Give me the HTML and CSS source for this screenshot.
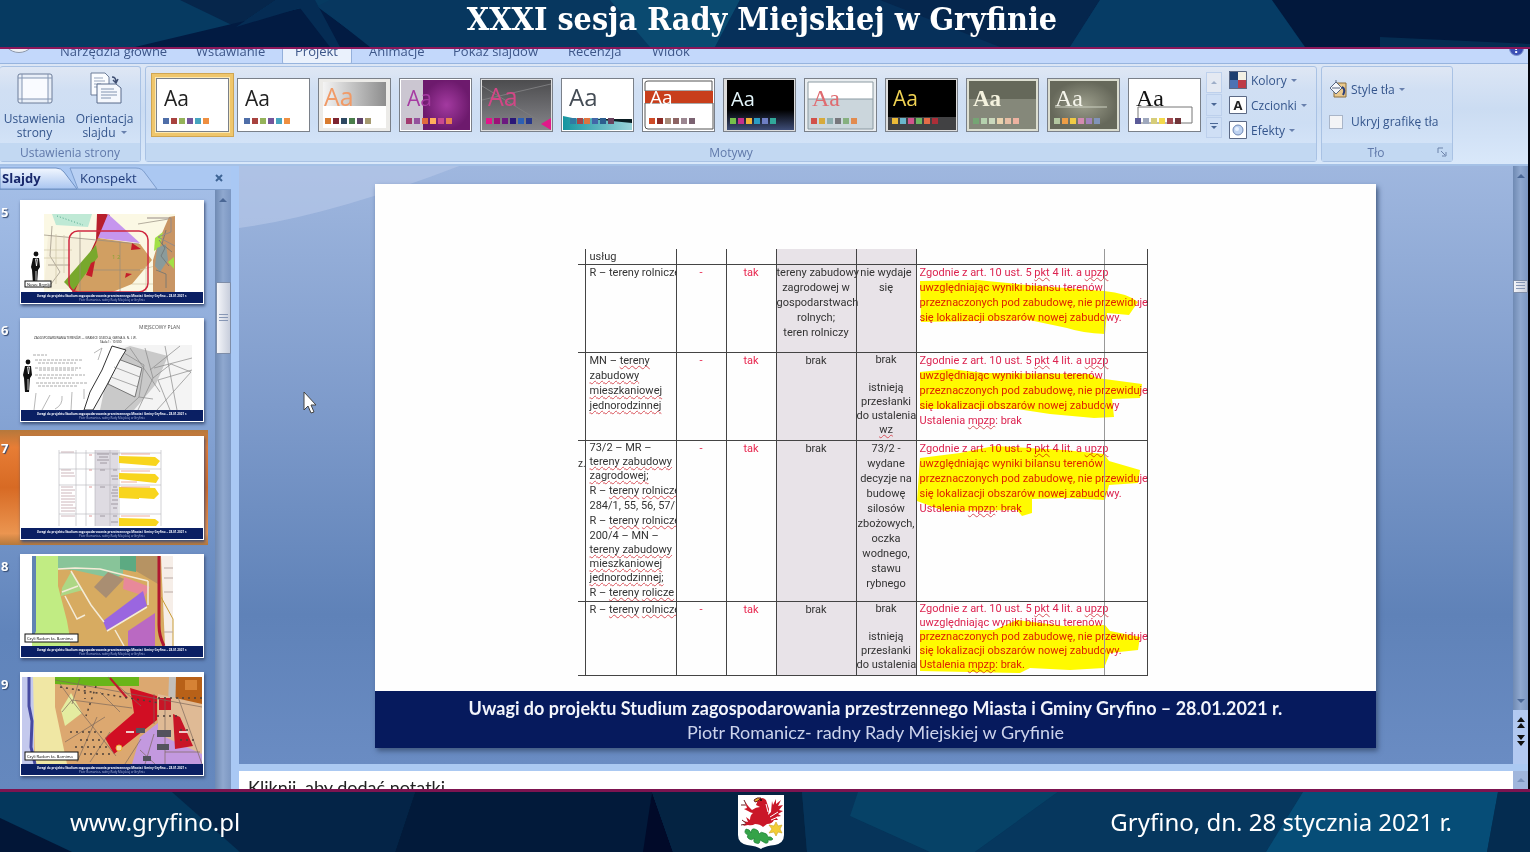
FILE: index.html
```html
<!DOCTYPE html>
<html lang="pl">
<head>
<meta charset="utf-8">
<title>XXXI sesja Rady Miejskiej w Gryfinie</title>
<link rel="stylesheet" href="styles.css">
</head>
<body>
<svg class="defs" aria-hidden="true">
  <defs>
    <g id="band">
      <rect x="1" y="92" width="182" height="11" fill="#0a1f63"/>
      <text x="92" y="97" text-anchor="middle" font-size="3" font-weight="700" fill="#f2f4fc">Uwagi do projektu Studium zagospodarowania przestrzennego Miasta i Gminy Gryfino – 28.01.2021 r.</text>
      <text x="92" y="101" text-anchor="middle" font-size="3" fill="#aab5da">Piotr Romanicz- radny Rady Miejskiej w Gryfinie</text>
    </g>
    <g id="person" fill="#111">
      <circle cx="0" cy="3" r="2.400"/><path d="M-3 7h6l1 9-2 3-1 14h-4l-1-14-1-3z"/><path d="M-.5 8h2l-1 7zM0 20v11" stroke="#fff" stroke-width=".8"/>
    </g>
    <linearGradient id="gGray" x1="0" x2="1"><stop stop-color="#f4f4f4"/><stop offset="1" stop-color="#8d8d8d"/></linearGradient>
    <linearGradient id="gDark" x1="0" x2="0" y1="0" y2="1"><stop stop-color="#4c4c4e"/><stop offset="1" stop-color="#85858a"/></linearGradient>
    <linearGradient id="gTeal"><stop stop-color="#1595a0"/><stop offset="1" stop-color="#9bd3da"/></linearGradient>
    <linearGradient id="gNight" x1="0" x2="0" y1="0" y2="1"><stop offset=".6"/><stop offset="1" stop-color="#3e4d77"/></linearGradient>
    <radialGradient id="gPurple"><stop stop-color="#a33aa0"/><stop offset="1" stop-color="#6d1a6d"/></radialGradient>
    <radialGradient id="gOlive"><stop stop-color="#9c9e8c"/><stop offset="1" stop-color="#66685a"/></radialGradient>
  </defs>
</svg>

<header class="banner">
  <svg class="facets" viewBox="0 0 1530 47" preserveAspectRatio="none" aria-hidden="true">
    <rect width="1530" height="47" fill="#063a61"/>
    <path d="M180 0H276L236 27z" fill="#06264b"/><path d="M135 47L236 23 315 5 372 47z" fill="#021b42"/><path d="M276 0H315L340 47H330L300 8 236 27z" fill="#052c54"/>
    <path d="M330 0H640L650 47H370L318 6z" fill="#07375f"/><path d="M610 0H740L715 47H650z" fill="#0a4a70"/><path d="M740 0H1100L1070 47H715z" fill="#06305a"/><path d="M880 0H1100L1070 47H1000z" fill="#05264d"/>
    <path d="M1100 0H1272L1305 47H1070z" fill="#063c65"/><path d="M1272 0H1530V47H1305z" fill="#02183c"/><path d="M1380 37L1530 44V47H1380z" fill="#052c51"/>
  </svg>
  <h1 class="banner-title">XXXI sesja Rady Miejskiej w Gryfinie</h1>
</header>

<main class="app">
  <nav class="ribbon-tabs">
    <span class="office-orb"></span>
    <button class="tab tab-home">Narzędzia główne</button>
    <button class="tab tab-insert">Wstawianie</button>
    <button class="tab tab-design active">Projekt</button>
    <button class="tab tab-anim">Animacje</button>
    <button class="tab tab-show">Pokaz slajdów</button>
    <button class="tab tab-review">Recenzja</button>
    <button class="tab tab-view">Widok</button>
    <button class="help" aria-label="Pomoc">?</button>
  </nav>

  <section class="ribbon">
    <div class="group group-page">
      <div class="group-body">
        <button class="big">
          <svg width="36" height="32" viewBox="0 0 36 32"><rect x="1" y="2" width="34" height="29" rx="2" fill="#e9eff8" stroke="#6c7d99"/><rect x="5" y="6" width="26" height="21" fill="#f9fbff"/><path d="M5 2v29M31 2v29M1 6h34M1 27h34" stroke="#8395b2" stroke-width="1"/></svg>
          <span>Ustawienia<br>strony</span>
        </button>
        <button class="big">
          <svg width="36" height="32" viewBox="0 0 36 32"><path d="M4 1h14l4 4v18H4z" fill="#fafcff" stroke="#6c7d99"/><path d="M7 6h9M7 9h11M7 12h7M7 15h7" stroke="#97a5bd"/><path d="M10 12h19l5 4v15H10z" fill="#f5f8fd" stroke="#586a8a"/><path d="M14 17h13M14 20h16M14 23h16M14 26h10" stroke="#8294b0"/><path d="M25 5q4 0 4 5M26 8l3 3 2-4" fill="none" stroke="#3d4d70" stroke-width="1.500"/></svg>
          <span>Orientacja<br>slajdu <i class="caret"></i></span>
        </button>
      </div>
      <div class="group-label">Ustawienia strony</div>
    </div>

    <div class="group group-themes">
      <div class="group-body">
        <div class="gallery">
          <button class="theme selected"><svg viewBox="0 0 73 54"><rect width="73" height="54" fill="#fff"/><text x="8" y="28" font-size="21" fill="#222">Aa</text><path fill="#4f6ea8" d="M7 40h6v6H7z"/><path fill="#a8423f" d="M15 40h6v6h-6z"/><path fill="#95b35a" d="M23 40h6v6h-6z"/><path fill="#75559a" d="M31 40h6v6h-6z"/><path fill="#46a5bf" d="M39 40h6v6h-6z"/><path fill="#ef8f40" d="M47 40h6v6h-6z"/></svg></button>
          <button class="theme"><svg viewBox="0 0 73 54"><rect width="73" height="54" fill="#fff"/><text x="8" y="28" font-size="21" fill="#222">Aa</text><path fill="#4f6ea8" d="M7 40h6v6H7z"/><path fill="#a8423f" d="M15 40h6v6h-6z"/><path fill="#95b35a" d="M23 40h6v6h-6z"/><path fill="#75559a" d="M31 40h6v6h-6z"/><path fill="#46a5bf" d="M39 40h6v6h-6z"/><path fill="#ef8f40" d="M47 40h6v6h-6z"/></svg></button>
          <button class="theme"><svg viewBox="0 0 73 54"><rect width="73" height="54" fill="#ecebe8"/><rect x="5" y="4" width="63" height="24" fill="url(#gGray)"/><rect x="5" y="28" width="63" height="22" fill="#fff"/><text x="6" y="28" font-size="25" fill="#f19a66">Aa</text><path fill="#d97b2e" d="M7 40h6v6H7z"/><path fill="#7e2430" d="M15 40h6v6h-6z"/><path fill="#2e4961" d="M23 40h6v6h-6z"/><path fill="#4b7e4b" d="M31 40h6v6h-6z"/><path fill="#5e4268" d="M39 40h6v6h-6z"/><path fill="#a59a70" d="M47 40h6v6h-6z"/></svg></button>
          <button class="theme"><svg viewBox="0 0 73 54"><rect width="73" height="54" fill="#fff"/><rect x="2" y="2" width="22" height="50" fill="#cbc6d1"/><rect x="24" y="2" width="47" height="50" fill="url(#gPurple)"/><text x="8" y="28" font-size="21" fill="#a63ba2">Aa</text><path fill="#a23a70" d="M7 40h6v6H7z"/><path fill="#94529d" d="M15 40h6v6h-6z"/><path fill="#e0693c" d="M23 40h6v6h-6z"/><path fill="#ffad5c" d="M31 40h6v6h-6z"/><path fill="#c9488f" d="M39 40h6v6h-6z"/><path fill="#e77f50" d="M47 40h6v6h-6z"/></svg></button>
          <button class="theme"><svg viewBox="0 0 73 54"><rect width="73" height="54" fill="#ddd"/><rect x="2" y="2" width="69" height="50" fill="url(#gDark)"/><path d="M2 8L71 50M2 22L71 6" stroke="#7c7c7e"/><path d="M61 46l10-6v12z" fill="#e0198a"/><text x="8" y="28" font-size="25" fill="#d24786">Aa</text><path fill="#e3158a" d="M6 40h6v6H6z"/><path fill="#9c1277" d="M14 40h6v6h-6z"/><path fill="#6c1980" d="M22 40h6v6h-6z"/><path fill="#2a1878" d="M30 40h6v6h-6z"/><path fill="#2c60b4" d="M38 40h6v6h-6z"/><path fill="#27378b" d="M46 40h6v6h-6z"/></svg></button>
          <button class="theme"><svg viewBox="0 0 73 54"><rect width="73" height="54" fill="#fff"/><path d="M2 38q14 4 30 2l39 3v9H2z" fill="url(#gTeal)"/><path d="M30 41h41v4z" fill="#0a1d22"/><text x="8" y="28" font-size="24" fill="#444c55">Aa</text><path fill="#317aa2" d="M9 40h6v6H9z"/><path fill="#a74646" d="M16 40h6v6h-6z"/><path fill="#df7440" d="M23 40h6v6h-6z"/><path fill="#4267a8" d="M31 40h6v6h-6z"/><path fill="#2c5e8e" d="M39 40h6v6h-6z"/><path fill="#69425d" d="M47 40h6v6h-6z"/></svg></button>
          <button class="theme"><svg viewBox="0 0 73 54"><rect width="73" height="54" fill="#fff"/><path d="M3 13V5q0-2 3-2h64v10zM3 25h68v26H6q-3 0-3-3z" fill="#fff" stroke="#555"/><rect x="3" y="13" width="68" height="12" fill="#c83e1b"/><text x="8" y="26" font-size="19" fill="#fff">Aa</text><path fill="#cf4b27" d="M7 40h6v6H7z"/><path fill="#8c2a25" d="M15 40h6v6h-6z"/><path fill="#a68b79" d="M23 40h6v6h-6z"/><path fill="#8d6463" d="M31 40h6v6h-6z"/><path fill="#9b8791" d="M39 40h6v6h-6z"/><path fill="#7b6271" d="M47 40h6v6h-6z"/></svg></button>
          <button class="theme"><svg viewBox="0 0 73 54"><rect width="73" height="54" fill="#ddd"/><rect x="4" y="2" width="67" height="50" fill="url(#gNight)"/><text x="8" y="28" font-size="20" fill="#e3f5fa">Aa</text><path fill="#76bf4a" d="M7 40h6v6H7z"/><path fill="#c42f8c" d="M15 40h6v6h-6z"/><path fill="#f1b335" d="M23 40h6v6h-6z"/><path fill="#2b9dc5" d="M31 40h6v6h-6z"/><path fill="#6e7ec4" d="M39 40h6v6h-6z"/><path fill="#31a89a" d="M47 40h6v6h-6z"/></svg></button>
          <button class="theme"><svg viewBox="0 0 73 54"><rect width="73" height="54" fill="#e9edf0"/><rect x="4" y="4" width="65" height="17" fill="#fff"/><rect x="4" y="21" width="65" height="30" fill="#cbd6dc"/><path d="M4 21h65M4 4h65v47H4z" stroke="#8b9aa2" fill="none"/><text class="serif" x="8" y="28" font-size="24" fill="#df6b70">Aa</text><path fill="#d15149" d="M7 40h6v6H7z"/><path fill="#d7aa3a" d="M15 40h6v6h-6z"/><path fill="#8daeae" d="M23 40h6v6h-6z"/><path fill="#77777c" d="M31 40h6v6h-6z"/><path fill="#86b07f" d="M39 40h6v6h-6z"/><path fill="#e28b4e" d="M47 40h6v6h-6z"/></svg></button>
          <button class="theme"><svg viewBox="0 0 73 54"><rect width="73" height="54" fill="#ddd"/><rect x="3" y="2" width="68" height="37" /><rect x="3" y="39" width="68" height="13" fill="#414143"/><text x="8" y="28" font-size="21" fill="#efd253">Aa</text><path fill="#ecba37" d="M7 40h6v6H7z"/><path fill="#6ab7cc" d="M15 40h6v6h-6z"/><path fill="#d0548b" d="M23 40h6v6h-6z"/><path fill="#6db763" d="M31 40h6v6h-6z"/><path fill="#e56b48" d="M39 40h6v6h-6z"/><path fill="#ac2e38" d="M47 40h6v6h-6z"/></svg></button>
          <button class="theme"><svg viewBox="0 0 73 54"><rect width="73" height="54" fill="#dddfd2"/><rect x="3" y="3" width="67" height="18" fill="#65685a"/><rect x="3" y="21" width="67" height="30" fill="#85887a"/><text class="serif" x="7" y="28" font-size="23" font-weight="700" fill="#f4f2de">Aa</text><path fill="#75a574" d="M7 40h6v6H7z"/><path fill="#b5d1ae" d="M15 40h6v6h-6z"/><path fill="#cbd9bd" d="M23 40h6v6h-6z"/><path fill="#ead3ae" d="M31 40h6v6h-6z"/><path fill="#e7bea5" d="M39 40h6v6h-6z"/><path fill="#edb2a0" d="M47 40h6v6h-6z"/></svg></button>
          <button class="theme"><svg viewBox="0 0 73 54"><rect width="73" height="54" fill="#dadccf"/><rect x="3" y="3" width="67" height="48" fill="url(#gOlive)"/><path d="M8 29h52" stroke="#ccd0c1"/><text class="serif" x="8" y="28" font-size="24" fill="#f5f5eb">Aa</text><path fill="#b3c7a0" d="M7 40h6v6H7z"/><path fill="#ed9d46" d="M15 40h6v6h-6z"/><path fill="#f0cb44" d="M23 40h6v6h-6z"/><path fill="#d48bb0" d="M31 40h6v6h-6z"/><path fill="#a182bc" d="M39 40h6v6h-6z"/><path fill="#8194b9" d="M47 40h6v6h-6z"/></svg></button>
          <button class="theme"><svg viewBox="0 0 73 54"><rect width="73" height="54" fill="#fff"/><path d="M10 29h54v16H10z" fill="#fff" stroke="#777"/><text class="serif" x="8" y="28" font-size="24" fill="#111">Aa</text><path fill="#5b5b98" d="M7 40h6v6H7z"/><path fill="#9fa8bd" d="M15 40h6v6h-6z"/><path fill="#d6cd79" d="M23 40h6v6h-6z"/><path fill="#f3d94d" d="M31 40h6v6h-6z"/><path fill="#a24b51" d="M39 40h6v6h-6z"/><path fill="#713539" d="M47 40h6v6h-6z"/></svg></button>
        </div>
        <div class="gallery-scroll">
          <button aria-label="W górę"><i class="arrow up dim"></i></button>
          <button aria-label="W dół"><i class="arrow down"></i></button>
          <button aria-label="Więcej"><i class="arrow down more"></i></button>
        </div>
        <div class="stack">
          <button class="small"><svg width="18" height="18" viewBox="0 0 18 18"><path fill="#1d3f70" d="M0 0h9v9H0z"/><path fill="#f3f0e4" d="M9 0h9v9H9z"/><path fill="#4d72b3" d="M0 9h9v9H0z"/><path fill="#bd3a46" d="M9 9h9v9H9z"/><path d="M.5.5h17v17H.5z" fill="none" stroke="#5c6a86"/></svg>Kolory <i class="caret"></i></button>
          <button class="small"><svg width="18" height="18" viewBox="0 0 18 18"><path d="M.5.5h17v17H.5z" fill="#fff" stroke="#5c6a86"/><text x="9" y="14" text-anchor="middle" font-size="13" font-weight="700" fill="#222">A</text></svg>Czcionki <i class="caret"></i></button>
          <button class="small"><svg width="18" height="18" viewBox="0 0 18 18"><path d="M.5.5h17v17H.5z" fill="#fff" stroke="#5c6a86"/><circle cx="9" cy="9" r="5" fill="#bfd3f1" stroke="#6f88b5"/><circle cx="8" cy="8" r="2" fill="#e9f2ff"/></svg>Efekty <i class="caret"></i></button>
        </div>
      </div>
      <div class="group-label">Motywy</div>
    </div>

    <div class="group group-back">
      <div class="group-body">
        <div class="back-stack">
          <button class="small"><svg width="18" height="18" viewBox="0 0 18 18"><path d="M8 3h9v14H5v-5z" fill="#e9c98e" stroke="#8c6f3d"/><path d="M1 8l6-6 6 6-6 6z" fill="#f4f6fa" stroke="#56657f"/><path d="M7 2V0M3 8h8" stroke="#56657f"/><path d="M13 7q4 2 1 8" fill="none" stroke="#2b3f79" stroke-width="2"/></svg>Style tła <i class="caret"></i></button>
          <label class="check"><input type="checkbox"> Ukryj grafikę tła</label>
        </div>
      </div>
      <div class="group-label label-back">Tło<button class="launcher" aria-label="Opcje tła"><svg width="10" height="10" viewBox="0 0 10 10"><path d="M1 6V1h5M4 4l4 4M9 5v4H5" fill="none" stroke="#6d83aa"/></svg></button></div>
    </div>
  </section>

  <div class="workspace">
    <aside class="pane">
      <div class="pane-tabs">
        <svg class="pane-shape" viewBox="0 0 230 24" aria-hidden="true"><defs><linearGradient id="gTab" x1="0" x2="0" y1="0" y2="1"><stop stop-color="#f2f7ff"/><stop offset="1" stop-color="#a9c5f0"/></linearGradient></defs><path d="M70 2H136q6 0 9 5l12 16H78z" fill="#b9d0f3" stroke="#7d9dcd"/><path d="M0 2H56q5 0 8 4l13 17H0z" fill="url(#gTab)" stroke="#6f91c4"/></svg>
        <button class="pane-tab current">Slajdy</button>
        <button class="pane-tab">Konspekt</button>
        <button class="pane-close" aria-label="Zamknij"><svg width="8" height="8" viewBox="0 0 8 8"><path d="M1 1l6 6M7 1L1 7" stroke="#3f6596" stroke-width="2"/></svg></button>
      </div>
      <div class="pane-body">
        <ol class="slides">
          <li class="slide-item"><b>5</b>
            <svg class="mini" viewBox="0 0 184 104"><rect width="184" height="104" fill="#fff"/>
              <path d="M24 14H155V92H24z" fill="#fbf8e4"/><path d="M32 14h40l-4 13-32-2z" fill="#bfe9d5"/><path d="M37 16l26 9" stroke="#4fa58a" stroke-dasharray="1 2"/>
              <path d="M28 35l-4 54h30l24-50z" fill="#f5efdb"/><path d="M77 14h9l4 1-12 27-22 50h-4L76 40z" fill="#b71f2c"/>
              <path d="M88 14l32 29-42-5z" fill="#c696ee"/><path d="M78 38l42 6 12 16-20 24-22 9H54l22-50z" fill="#d19f62"/><path d="M76 45l2 12-25 34-9-9z" fill="#78a82c"/>
              <path d="M24 35l95 9M32 26l-2 30 10 16-12 16M118 24l37-6M60 32v60M100 42v50M28 65h22M70 70h50" fill="none" stroke="#958c7f" stroke-width=".7"/>
              <path d="M24 50h28M24 58h25M36 34v50M44 35v38M120 70l30-8M112 84h22M126 66v26" stroke="#cfc5a6" stroke-width=".7"/>
              <path d="M133 60l6-20 10-23 6-1v76h-22z" fill="#c89564"/><path d="M135 38l8-6-3 15-6 4z" fill="#a2e046"/><path d="M148 62l6-5v12z" fill="#a2e046"/><path d="M137 48l9-4 2 16-8 12-5-6z" fill="#8a9b9b"/><path d="M139 40l6 8-4 8 8 10M146 30l-4 14 10 8M136 70l10 4v14" fill="none" stroke="#6d7374" stroke-width=".8"/>
              <path d="M112 43l9 6-10 1zM71 63l4-2-3 16-6-2zM106 73l6 1-7 4z" fill="#c41d2a"/><path d="M127 18h24v14l-13 5 17 9" fill="none" stroke="#968a87"/>
              <rect x="49" y="31" width="79" height="61" rx="9" fill="none" stroke="#cf2840" stroke-width="1.500"/>
              <text x="92" y="59" font-size="6" fill="#89a334">1 2</text><use href="#person" x="16" y="51"/><rect x="5" y="81" width="26" height="6" fill="#fff" stroke="#111"/><text x="7" y="86" font-size="4">Nowe Brynki</text><use href="#band"/></svg>
          </li>
          <li class="slide-item"><b>6</b>
            <svg class="mini" viewBox="0 0 184 104"><rect width="184" height="104" fill="#fff"/>
              <text x="119" y="11" font-size="5" fill="#555">MIEJSCOWY PLAN</text><text x="14" y="21" font-size="3" fill="#222">ZAGOSPODAROWANIA TERENÓW — GRANICE OSIEDLA, GMINA G. N. I. W.</text><text x="80" y="25" font-size="3">Skala 1 : 10 000</text>
              <path d="M98 27H172V92H70l10-25z" fill="#f4f4f4"/><path d="M92 35l18-7 38 10-12 28-22 26H80z" fill="#c9c9c9"/><path d="M98 41l24 9-7 29-27-13z" fill="#f2f2f2" stroke="#777"/>
              <path d="M92 28l14 4-6 10-13 25-14 25H64l6-18 12-22z" fill="#fff" stroke="#333"/><path d="M104 35l20 12-5 32-14 13M94 49l26 10M91 59l27 10M125 30l8 30-15 32M133 60l18-14 20 8-34 38M160 28l-30 24M110 30l30 44M172 40l-38 10M150 92l-12-30 34-10M145 28l12 64M119 79l14 2" fill="none" stroke="#888" stroke-width=".7"/>
              <path d="M74 35l8-5-4 12M16 75l-2 17M30 77L22 92M42 78q1 9-7 13M52 74l-1 18M64 71v10" fill="none" stroke="#999" stroke-width=".7"/>
              <path d="M13 37h14M15 42h48M18 45h38M15 50h46M19 52h37M15 57h50M18 60h34M16 65h51M18 68h39" stroke="#aaa" stroke-dasharray="3 1"/><use href="#person" x="8" y="41"/><use href="#band"/></svg>
          </li>
          <li class="slide-item chosen"><b>7</b>
            <svg class="mini" viewBox="0 0 184 104"><rect width="184" height="104" fill="#fff"/><path d="M75 14h23v76H75z" fill="#dedbe2"/><path d="M39 17h102M39 33h102M39 49h102M39 78h102M39 14v76M56 14v76M66 14v76M75 14v76M90 14v76M99 14v76M141 14v76" stroke="#b4b4ba" stroke-width=".6"/><path d="M99 20l36 1 5 4-4 5-37-3zM99 37l36 1 4 4-3 5-37-4zM99 51l36 1 4 6-5 5-15-1v1l-20-1zM99 82l36 1 4 3-3 4H99z" fill="#f8d51d"/><path d="M101 18h29M101 35h29M101 51h29M101 80h29M101 46h16" stroke="#eb9a86" stroke-width=".8"/><path d="M41 16h13M41 34h10M41 37h13M41 40h14M41 51h12M41 54h14M41 57h11M41 60h14M41 63h14M41 66h14M41 69h12M41 72h15M41 75h14M41 80h14" stroke="#c0a3a9" stroke-width=".8"/><path d="M77 18h12M79 21h9M77 24h12M80 27h7M92 18h6M93 34h4M91 40h7M92 43h6M93 51h4M92 54h6M91 57h7M92 60h6M92 64h6M91 68h7M93 72h4M93 80h4M91 86h7M80 34h5M80 51h5M80 80h5" stroke="#8f8993" stroke-width=".8"/><path d="M69 19h3M69 34h3M69 51h3M69 80h3" stroke="#d99"/><use href="#band"/></svg>
          </li>
          <li class="slide-item"><b>8</b>
            <svg class="mini" viewBox="0 0 184 104"><rect width="184" height="104" fill="#fff"/><path d="M12 2h141v90H12z" fill="#d7ab61"/><path d="M12 2h26v30l9 35 3 17v8H12z" fill="#c1ec83"/><path d="M12 2h4v75l-4 10z" fill="#6083b3"/><path d="M38 2h65v18l-8 5-41-9-16-1z" fill="#88c499"/><path d="M100 2h16v16l-16-3z" fill="#5caa82"/><path d="M116 2h22v28l-22-13z" fill="#b69363"/><path d="M42 34l9-16 12 18-22 6z" fill="#add785"/><path d="M104 23l26 10-5 9-22-7z" fill="#e8899a"/><path d="M88 18l16 7-18 19-12-11z" fill="#a98e72"/><path d="M83 67l40-30 4 15-40 25z" fill="#9a66e0"/><path d="M108 77l27-18v33h-27z" fill="#ba69c2"/><path d="M141 2h12v90h-8z" fill="#f6eee8"/><path d="M38 15l17-1 25 1 48 12M51 17l20 34 13 17M58 32l-16 6M87 77l40-24M128 27v24M45 42l12 23 8-4M95 76l9 16" fill="none" stroke="#f4ebd7" stroke-width="1.500"/><path d="M139 2v69q0 11 5 21" fill="none" stroke="#b01830" stroke-width="3"/><path d="M141 43l12 22v27" fill="none" stroke="#c89c36"/><path d="M144 14h9M144 24h9M144 38h9M144 78h9" stroke="#b9aaa6"/><rect x="5" y="80" width="53" height="8" fill="#fff" stroke="#111"/><text x="7" y="86" font-size="4">Czyli Radom ks. Barnima</text><use href="#band"/></svg>
          </li>
          <li class="slide-item"><b>9</b>
            <svg class="mini" viewBox="0 0 184 104"><rect width="184" height="104" fill="#fff"/><path d="M2 5h180v87H2z" fill="#dca870"/><path d="M2 5h12v87H2z" fill="#c4c9ed"/><path d="M13 5h22v30l12 57H15z" fill="#f0e7a4"/><path d="M35 5h84v9H75L35 12z" fill="#69b519"/><path d="M154 5h28v35l-27-9z" fill="#b86118"/><path d="M165 8h12v10h-12z" fill="#d68235"/><path d="M41 38l10-17 11 20-17 13z" fill="#e4eca0"/><path d="M149 5h7l-2 87h-8z" fill="#c3bfba"/><path d="M120 65l18-14 44 26v15h-70z" fill="#c399df"/><path d="M138 22l44 10v50l-44-20z" fill="#dfba95"/><path d="M110 16l27 8v24l-28 22-15 12-9-16 29-25z" fill="#d10e23"/><path d="M139 26h12v12h-12zM153 42l7 3 13 29-18 3z" fill="#c81527"/><path d="M9 5v29l3 15-1 26 4 17" fill="none" stroke="#474aa0" stroke-width="3"/><path d="M35 8l147 27M40 12l13 18 43 54M42 40l10-12 60 8M80 20l20 20M88 5l33 29M45 70l40-25M57 90l20-45M70 90l20-30M105 92l16-25M125 92l9-30M134 22v30M145 25v67M60 6l-8 26M158 25l24 67M145 80h35M120 78l15 14" fill="none" stroke="#7c685b" stroke-width=".7"/><path d="M90 6l17 20" stroke="#c1182c" stroke-width="2"/><path d="M40 15l100 16M65 14v13M76 14l-10 30M138 26h44M50 60h35M55 75h35M137 44h20M160 58h10M60 68h24M64 82h26M160 68h18" stroke="#4d4039" stroke-width="1.500" stroke-dasharray="2 4"/><path d="M137 58h14v7h-14zM137 72h12v6h-12zM123 84h8v5h-8zM116 56h9v5h-9z" fill="#54525e"/><path d="M106 60h8M159 60h9" stroke="#f0c9c9" stroke-width="2"/><circle cx="99" cy="76" r="3" fill="#f5d3a1" stroke="#eaaf33"/><rect x="5" y="80" width="53" height="8" fill="#fff" stroke="#111"/><text x="7" y="86" font-size="4">Czyli Radom ks. Barnima</text><use href="#band"/></svg>
          </li>
        </ol>
        <div class="scroll pane-scroll"><i class="arrow up"></i><span class="scroll-thumb"></span></div>
      </div>
    </aside>

    <section class="editor">
      <div class="stage-row">
        <div class="stage">
          <svg class="swoosh" viewBox="0 0 1273 100" preserveAspectRatio="none" aria-hidden="true"><path d="M0 0H220Q90 50 0 62z" fill="#b9caea" opacity=".6"/></svg>
          <svg class="cursor" width="14" height="23" viewBox="0 0 14 23"><path d="M1 1v18l4-4 3 7 3-1-3-7h5z" fill="#fff" stroke="#444"/></svg>
          <article class="slide">
            <table class="plan">
              <colgroup><col class="c-edge"><col class="c-area"><col class="c-mark"><col class="c-mark"><col class="c-use"><col class="c-wz"><col class="c-note"></colgroup>
              <tbody>
              <tr class="r-top"><td></td><td>usług</td><td></td><td></td><td class="gray"></td><td class="gray"></td><td class="note"></td></tr>
              <tr class="r-mid"><td></td><td>R – tereny rolnicze</td><td class="red">-</td><td class="red">tak</td><td class="gray">tereny zabudowy<br>zagrodowej w<br>gospodarstwach<br>rolnych;<br>teren rolniczy</td><td class="gray">nie wydaje<br>się</td>
                <td class="note"><svg class="marker" width="230" height="80" viewBox="0 0 230 80"><path d="M3 16L60 15 110 20 187 26Q210 28 221 37L212 50 190 48 188 69Q165 68 150 63L112 55 4 57z"/></svg><p>Zgodnie z art. 10 ust. 5 <u>pkt</u> 4 lit. a <u>upzp</u><br>uwzględniając wyniki bilansu terenów<br>przeznaczonych pod zabudowę, nie przewiduje<br>się lokalizacji obszarów nowej zabudowy.</p></td></tr>
              <tr class="r-mid"><td></td><td>MN – <u>tereny</u><br><u>zabudowy</u><br><u>mieszkaniowej</u><br><u>jednorodzinnej</u></td><td class="red">-</td><td class="red">tak</td><td class="gray">brak</td><td class="gray tight">brak<br><br>istnieją<br>przesłanki<br>do ustalenia<br><u>wz</u></td>
                <td class="note"><svg class="marker" width="230" height="80" viewBox="0 0 230 80"><path d="M3 19L33 16 67 20 173 21 180 25 225 31 223 45 195 46 197 64 177 65 133 61 100 56 3 56z"/></svg><p>Zgodnie z art. 10 ust. 5 <u>pkt</u> 4 lit. a <u>upzp</u><br>uwzględniając wyniki bilansu terenów<br>przeznaczonych pod zabudowę, nie przewiduje<br>się lokalizacji obszarów nowej zabudowy<br>Ustalenia <u>mpzp</u>: brak</p></td></tr>
              <tr class="r-tall"><td class="edge-text">z.</td><td class="tight"><p>73/2 – MR –<br><u>tereny zabudowy</u><br><u>zagrodowej;</u></p><p>R – <u>tereny</u> <u>rolnicze</u></p><p>284/1, 55, 56, 57/1</p><p>R – <u>tereny</u> <u>rolnicze</u></p><p>200/4 – MN –<br><u>tereny zabudowy</u><br><u>mieszkaniowej</u><br><u>jednorodzinnej;</u></p><p>R – <u>tereny</u> <u>rolicze</u></p></td><td class="red">-</td><td class="red">tak</td><td class="gray">brak</td><td class="gray">73/2 -<br>wydane<br>decyzje na<br>budowę<br>silosów<br>zbożowych,<br>oczka<br>wodnego,<br>stawu<br>rybnego</td>
                <td class="note"><svg class="marker" width="230" height="80" viewBox="0 0 230 80"><path d="M3 17L43 12 77 5 147 9 187 13 192 20 223 29 221 42 192 44 188 59 150 57 115 58 115 72 105 75 100 69 27 70 0 60z"/></svg><p>Zgodnie z art. 10 ust. 5 <u>pkt</u> 4 lit. a <u>upzp</u><br>uwzględniając wyniki bilansu terenów<br>przeznaczonych pod zabudowę, nie przewiduje<br>się lokalizacji obszarów nowej zabudowy.<br>Ustalenia <u>mpzp</u>: brak</p></td></tr>
              <tr class="r-last"><td></td><td>R – <u>tereny</u> <u>rolnicze</u></td><td class="red">-</td><td class="red">tak</td><td class="gray">brak</td><td class="gray tight">brak<br><br>istnieją<br>przesłanki<br>do ustalenia</td>
                <td class="note tight"><svg class="marker" width="230" height="80" viewBox="0 0 230 80"><path d="M3 28L77 28 100 18 147 24 188 23 193 29 223 35 221 48 193 51 187 66 153 68 113 66 103 71 3 69z"/></svg><p>Zgodnie z art. 10 ust. 5 <u>pkt</u> 4 lit. a <u>upzp</u><br>uwzględniając wyniki bilansu terenów<br>przeznaczonych pod zabudowę, nie przewiduje<br>się lokalizacji obszarów nowej zabudowy.<br>Ustalenia <u>mpzp</u>: brak.</p></td></tr>
              </tbody>
            </table>
            <footer class="slide-foot">
              <strong>Uwagi do projektu Studium zagospodarowania przestrzennego Miasta i Gminy Gryfino – 28.01.2021 r.</strong>
              <span>Piotr Romanicz- radny Rady Miejskiej w Gryfinie</span>
            </footer>
          </article>
        </div>
        <div class="scroll stage-scroll">
          <i class="arrow up"></i><span class="scroll-thumb"></span><i class="arrow down low"></i>
          <div class="pager"><svg width="10" height="11" viewBox="0 0 10 11"><path d="M5 0l4 5H1zM5 6l4 5H1z" fill="#111"/></svg><svg width="10" height="11" viewBox="0 0 10 11"><path d="M5 5l4-5H1zM5 11l4-5H1z" fill="#111"/></svg></div>
        </div>
      </div>
      <div class="notes"><textarea aria-label="Notatki" rows="1">Kliknij, aby dodać notatki</textarea><span class="notes-scroll"><i class="arrow up dim"></i></span></div>
    </section>
  </div>
</main>

<footer class="bottom">
  <svg class="facets" viewBox="0 0 1530 60" preserveAspectRatio="none" aria-hidden="true">
    <rect width="1530" height="60" fill="#063456"/>
    <path d="M0 0H172L240 60H72L0 26z" fill="#04375c"/><path d="M0 26L72 60H0z" fill="#021637"/><path d="M172 0H415L395 60H240z" fill="#042447"/><path d="M415 0H652L645 60H395z" fill="#021a3a"/><path d="M652 0L673 60H643z" fill="#010a29"/><path d="M652 0H802L807 60H673z" fill="#042342"/><path d="M802 0H858L850 24 930 60H807z" fill="#06345a"/><path d="M858 0H1058L975 60H930L850 24z" fill="#064267"/><path d="M1058 0H1303L1266 60H975z" fill="#06375e"/><path d="M1303 0H1498L1487 60H1266z" fill="#064d77"/><path d="M1498 0H1530V60H1487z" fill="#042c50"/>
  </svg>
  <a class="site" href="#">www.gryfino.pl</a>
  <svg class="crest" width="46" height="54" viewBox="0 0 46 54" role="img" aria-label="Herb Gryfina">
    <path d="M0 0h46v40q0 8-9 10-10 1-14 4-4-3-14-4-9-2-9-10z" fill="#fff"/>
    <path d="M20 5q4-4 8 0l3 9-1 6 3-3 1-11 1 4 3-6v5l5-4-3 6 5-1-4 5 4 1-5 3 3 2-5 1 2 3-4 0q-2 4-7 4l-4 3q-3-3-8-3-3 2-7 1l-5 1 3-3-3-2 5 1-2-5 4 3q0-5 3-7-2 0-5-2l-4-2 3-1-2-6 4 5 3 3q4-3 8-3l-4-2z" fill="#ca1728"/>
    <path d="M16 5q3-3 7-2l-3 3-3 1zM3 10l5 0M6 5l2 4M3 30l5-1M4 25l4 3" fill="#e2a52a" stroke="#6e2022" stroke-width="1"/><path d="M28 9l2 8M32 22l8-5M33 25l7-3" fill="none" stroke="#fff" stroke-width="1"/><circle cx="23" cy="5" r="1" fill="#111"/>
    <path d="M38 27l2 4 4-1-2 4 2 4-4-1-2 4-2-4-5 1 3-4-3-4 5 1z" fill="#f3cd36" stroke="#caa11c" stroke-width=".6"/>
    <path d="M8 34q4 0 5 4 0-5 4-4 4 1 4 5 2-3 5-1 3 0 4 4 3-1 5 2-1 2-5 1 1 4-3 3l-5-3q0 5-4 3-3 0-2-5-2 3-5 1-3-2-1-4-5-2-2-6z" fill="#35a348" stroke="#187a32" stroke-width=".6"/>
  </svg>
  <span class="date">Gryfino, dn. 28 stycznia 2021 r.</span>
</footer>
</body>
</html>
```

FILE: styles.css
```css
* { box-sizing: border-box; }
body { margin: 0; min-height: 100vh; display: flex; flex-direction: column; background: #02193a; font-family: "Open Sans", "Noto Sans", sans-serif; font-size: 12px; color: #34558c; }
button { font: inherit; color: inherit; background: none; border: 0; padding: 0; cursor: pointer; }
p { margin: 0; }
svg { display: block; }
.defs { position: absolute; width: 0; height: 0; }

/* banner and bottom bar */
.banner { position: relative; height: 49px; border-bottom: 2px solid #8c1659; display: flex; justify-content: center; overflow: hidden; }
.facets { position: absolute; inset: 0; width: 100%; height: 100%; }
.banner-title { position: relative; margin: 0; padding-right: 6px; font: 700 32px/38px "DejaVu Serif Condensed", "DejaVu Serif", serif; font-stretch: condensed; color: #fff; white-space: nowrap; }
.bottom { position: relative; height: 63px; border-top: 3px solid #7d1450; display: grid; grid-template-columns: 1fr 46px 1fr; align-items: center; padding: 0 78px 0 70px; color: #fff; font: 24px/30px "Noto Sans", sans-serif; }
.site { position: relative; color: inherit; text-decoration: none; }
.crest { position: relative; }
.date { position: relative; text-align: right; white-space: nowrap; }

/* ribbon */
.app { flex: 1; display: flex; flex-direction: column; border-right: 2px solid #02040c; background: #bfd4f3; overflow: hidden; }
.ribbon-tabs { height: 15px; display: flex; align-items: flex-start; background: #c3d8fb; border-bottom: 1px solid #97b4de; overflow: hidden; font-size: 13px; line-height: 18px; color: #3d5689; }
.office-orb { width: 34px; height: 34px; margin: -30px 24px 0 2px; border-radius: 50%; background: #edf0f5; border: 1px solid #8d98aa; flex: none; }
.tab { height: 24px; margin-top: -8px; line-height: 20px; display: flex; align-items: flex-start; white-space: nowrap; }
.tab-home { width: 136px; }
.tab-insert { width: 86px; }
.tab-design { width: 70px; padding-left: 12px; background: #eaf1fc; border: 1px solid #94b0db; border-radius: 3px; line-height: 18px; }
.tab-anim { width: 101px; padding-left: 17px; }
.tab-show { width: 115px; }
.tab-review { width: 84px; }
.help { width: 15px; height: 15px; margin: -8px 4px 0 auto; border-radius: 50%; background: #3b4fb5; color: #fff; border: 1px solid #7f95cf; line-height: 13px; font-weight: 700; }
.ribbon { display: flex; gap: 4px; padding: 2px 75px 2px 0; background: linear-gradient(#dce6f5, #cbdcf2 45%, #d9e8fa); border-bottom: 2px solid #a5c1e6; }
.group { display: flex; flex-direction: column; border: 1px solid #a9c2e4; border-radius: 3px; background: linear-gradient(#dfe7f4, #d0dff3 25%, #cddef4 60%, #d8e7fa); }
.group-page { width: 141px; border-left: 0; }
.group-themes { flex: 1; }
.group-back { width: 132px; }
.group-body { height: 76px; display: flex; }
.group-label { height: 18px; background: #c2d8f2; color: #6079aa; text-align: center; line-height: 20px; position: relative; }
.label-back { padding-right: 22px; }
.launcher { position: absolute; right: 5px; top: 4px; }
.big { width: 72px; display: flex; flex-direction: column; align-items: center; gap: 7px; padding-top: 5px; line-height: 14px; white-space: nowrap; }
.big:first-child { width: 70px; }
.big span { padding-top: 1px; }
.caret { display: inline-block; border: 3px solid transparent; border-top-color: #6880ad; border-bottom: 0; vertical-align: 3px; margin-left: 2px; }
.gallery { display: flex; gap: 8px; padding: 11px 5px 0 10px; }
.theme { width: 73px; height: 54px; outline: 1px solid #7a8089; outline-offset: -1px; flex: none; }
.theme svg { width: 73px; height: 54px; }
.theme.selected { box-shadow: 0 0 0 1px #fbe9b5, 0 0 0 4px #efc66c, 0 0 0 5px #cfa552; }
.theme text.serif { font-family: "Liberation Serif", serif; }
.gallery-scroll { width: 16px; display: grid; grid-template-rows: repeat(3, 1fr); gap: 1px; padding: 5px 0; }
.gallery-scroll button { background: #cfdff5; border: 1px solid #bdd0ec; display: grid; place-items: center; }
.gallery-scroll button:first-child { background: #e4e9f2; }
.arrow { display: block; width: 0; height: 0; border: 4px solid transparent; }
.arrow.up { border-bottom-color: #4a6795; border-top: 0; }
.arrow.down { border-top-color: #4a6795; border-bottom: 0; }
.arrow.dim { opacity: .45; }
.gallery-scroll .arrow { border-left-width: 3px; border-right-width: 3px; border-top-width: 3px; }
.gallery-scroll .arrow.up { border-top-width: 0; border-bottom-width: 3px; }
.arrow.more { position: relative; }
.arrow.more::before { content: ""; position: absolute; left: -4px; top: -6px; width: 8px; height: 1px; background: #4a6795; }
.stack { display: flex; flex-direction: column; gap: 7px; padding: 4px 0 0 7px; }
.small { display: flex; align-items: center; gap: 4px; height: 18px; white-space: nowrap; }
.small .caret { margin-left: 0; }
.back-stack { display: flex; flex-direction: column; gap: 15px; padding: 13px 0 0 7px; }
.check { display: flex; align-items: center; gap: 8px; white-space: nowrap; }
.check input { appearance: none; margin: 0; width: 14px; height: 14px; background: #f3f4f6; border: 1px solid #a9b5c8; }

/* slide list */
.workspace { flex: 1; display: flex; min-height: 0; }
.pane { width: 239px; border-right: 8px solid #a9c8f4; background: linear-gradient(#a6c0e8, #86a4d4 40%, #6084bb 75%, #6588be); display: flex; flex-direction: column; }
.pane-tabs { position: relative; height: 24px; display: flex; align-items: center; background: #abc8f2; border-bottom: 1px solid #7f9fcd; font-size: 13px; color: #1f3b7a; }
.pane-shape { position: absolute; left: 0; top: 0; width: 230px; height: 24px; }
.pane-tab { position: relative; width: 78px; text-align: left; padding-left: 2px; line-height: 20px; }
.pane-tab.current { font-weight: 700; color: #17276b; }
.pane-close { position: relative; margin: 0 8px 0 auto; }
.pane-body { flex: 1; display: flex; gap: 7px; }
.slides { flex: 1; list-style: none; margin: 0; padding: 4px 0 0; }
.slide-item { display: flex; gap: 8px; height: 118px; padding: 6px 0 0 1px; color: #fff; text-shadow: 1px 1px 1px #33496f; }
.slide-item b { width: 11px; font-size: 13px; line-height: 24px; }
.slide-item.chosen { background: linear-gradient(#b5783c, #e77d35 15%, #d76a24 50%, #eb9550 90%, #b5783c); background-size: 100% 115px; background-repeat: no-repeat; }
.mini { width: 184px; height: 104px; box-shadow: 1px 2px 3px #3a4e76; text-shadow: none; }
.scroll { width: 16px; background: linear-gradient(90deg, #6f8ab3, #8fa8cf 50%, #7c97c2); display: flex; flex-direction: column; align-items: center; }
.pane-scroll { padding-top: 8px; }
.scroll-thumb { width: 15px; height: 72px; margin-top: 80px; border: 1px solid #7e8da8; border-radius: 1px; background: repeating-linear-gradient(#8797b5 0 1px, transparent 1px 3px) center / 9px 9px no-repeat, linear-gradient(90deg, #f4f5f9, #c8cedc); }

/* editor */
.editor { flex: 1; display: flex; flex-direction: column; min-width: 0; }
.stage-row { flex: 1; display: flex; }
.stage { position: relative; flex: 1; padding: 18px 137px 15px 136px; background: linear-gradient(#9fb7df, #7e9bcb 40%, #5f82b8 75%, #6a8cc3); }
.swoosh { position: absolute; left: 0; top: 0; width: 100%; height: 100px; }
.cursor { position: absolute; left: 64px; top: 225px; }
.slide { position: relative; background: #fefefe; padding-top: 65px; box-shadow: 2px 3px 5px #41597f; }
.plan { margin-left: 203px; width: 570px; table-layout: fixed; border-collapse: collapse; font: 11px/15px Roboto, "Liberation Sans", sans-serif; color: #333; }
.c-edge { width: 7px; }
.c-area { width: 91px; }
.c-mark { width: 50px; }
.c-use { width: 80px; }
.c-wz { width: 60px; }
.plan td { border: 1px solid #444; padding: 0 0 0 4px; vertical-align: top; white-space: nowrap; overflow: hidden; }
.plan td:first-child { border-left: 0; padding: 0; }
.plan td:nth-child(n+3):nth-child(-n+6) { text-align: center; padding: 0; overflow: visible; }
.plan .r-top td { border-top: 0; height: 15px; }
.plan .r-mid td { height: 88px; }
.plan .r-tall td { height: 161px; }
.plan .r-last td { height: 74px; }
.plan .gray { background: #e8e3e8; }
.plan .red { color: #e8274f; }
.plan td.edge-text { padding-top: 15px; font-size: 10px; }
.plan td.tight { line-height: 14px; }
.tight p + p { margin-top: 1px; }
.plan u { text-decoration: underline wavy #d8525a 1px; text-underline-offset: 1px; text-decoration-skip-ink: none; }
.plan td.note { position: relative; padding-left: 3px; color: #dd2350; overflow: visible; }
.note p { position: relative; mix-blend-mode: multiply; }
.note::after { content: ""; position: absolute; top: 0; bottom: 0; right: 42px; border-left: 1px solid #999; }
.marker { position: absolute; left: 0; top: 0; fill: #fffa00; }
.slide-foot { margin-top: 15px; padding: 5px 0 4px; background: #061a5d; color: #f2f4fb; text-align: center; font: 18px/24px "Lato", "Open Sans", sans-serif; display: flex; flex-direction: column; white-space: nowrap; }
.slide-foot span { color: #ccd3ec; }
.stage-scroll { width: 15px; padding-top: 8px; }
.stage-scroll .scroll-thumb { height: 13px; margin-top: 102px; }
.stage-scroll .low { margin-top: auto; margin-bottom: 7px; }
.pager { width: 100%; height: 54px; background: #b2c9f1; display: flex; flex-direction: column; align-items: center; gap: 7px; padding-top: 7px; }
.notes { height: 25px; border-top: 7px solid #abc9f2; display: flex; overflow: hidden; background: #fff; }
.notes textarea { flex: 1; height: 40px; border: 0; padding: 2px 9px; resize: none; overflow: hidden; font: 18px/28px "Lato", "Open Sans", sans-serif; color: #222; background: #fff; }
.notes-scroll { width: 15px; background: #a0b6dc; display: grid; place-items: center; }
```
